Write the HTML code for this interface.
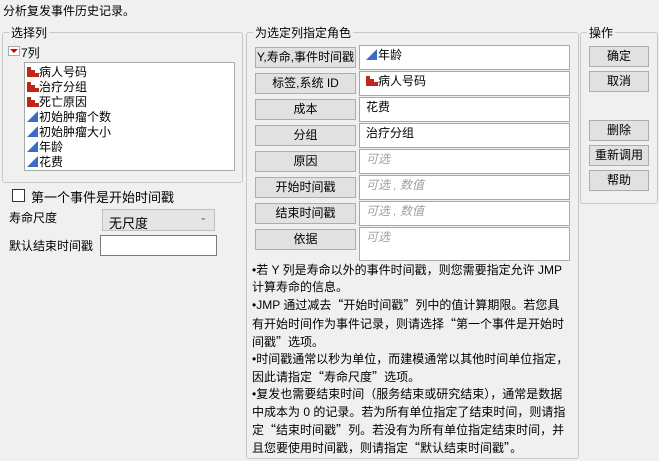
<!DOCTYPE html>
<html><head><meta charset="utf-8"><style>
*{box-sizing:border-box;margin:0;padding:0}
body{width:659px;height:461px;background:#f0f0f0;font-family:"Liberation Sans","Noto Sans CJK SC",sans-serif;font-size:12px;color:#000;position:relative;overflow:hidden}
.a{position:absolute;white-space:nowrap}
.fs{position:absolute;border:1px solid #c8c8c8;border-radius:3px}
.lg{position:absolute;background:#f0f0f0;padding:0 2px;top:-9px;left:6px;font-size:12px}
.btn{position:absolute;background:#e1e1e1;border:1px solid #adadad;text-align:center;font-size:12px;line-height:18px}
.box{position:absolute;background:#fff;border:1px solid #a9a9a9;padding:1px 0 0 6px;font-size:12px;line-height:16px}
.ph{color:#a0a0a0;font-style:italic}
.nom{display:inline-block;width:11px;height:11px;vertical-align:-1px;margin-right:1px;position:relative}
.nom i{position:absolute;bottom:0;width:4px;background:#c0271a}
.con{display:inline-block;width:0;height:0;border-left:11px solid transparent;border-bottom:11px solid #3a6cc4;vertical-align:-1px;margin-right:1px}
.notes{position:absolute;left:252px;top:262px;font-size:12px;line-height:17.2px;white-space:nowrap}
.q{font-family:"Noto Sans CJK SC",sans-serif}
</style></head><body>
<div class="a" style="left:3px;top:2px">分析复发事件历史记录。</div>

<div class="fs" style="left:2px;top:32px;width:241px;height:151px"><div class="lg">选择列</div></div>
<div class="a" style="left:8px;top:46px;width:12px;height:10px;border:1px solid #aaa;background:#fff"></div>
<div class="a" style="left:10px;top:49px;width:0;height:0;border-left:4px solid transparent;border-right:4px solid transparent;border-top:4px solid #d00"></div>
<div class="a" style="left:21px;top:44px">7列</div>
<div class="a" style="left:24px;top:62px;width:211px;height:109px;background:#fff;border:1px solid #a9a9a9;padding:2px 0 0 2px;line-height:15px">
<div><span class="nom"><i style="left:0;height:10px"></i><i style="left:4px;height:7px"></i><i style="left:8px;height:4px"></i></span>病人号码</div>
<div><span class="nom"><i style="left:0;height:10px"></i><i style="left:4px;height:7px"></i><i style="left:8px;height:4px"></i></span>治疗分组</div>
<div><span class="nom"><i style="left:0;height:10px"></i><i style="left:4px;height:7px"></i><i style="left:8px;height:4px"></i></span>死亡原因</div>
<div><span class="con"></span>初始肿瘤个数</div>
<div><span class="con"></span>初始肿瘤大小</div>
<div><span class="con"></span>年龄</div>
<div><span class="con"></span>花费</div>
</div>
<div class="a" style="left:12px;top:189px;width:13px;height:13px;background:#fff;border:1px solid #333"></div>
<div class="a" style="left:31px;top:187px;font-size:13px">第一个事件是开始时间戳</div>
<div class="a" style="left:9px;top:209px">寿命尺度</div>
<div class="a" style="left:102px;top:209px;width:113px;height:22px;background:#e5e5e5;border:1px solid #c0c0c0;padding:3px 0 0 6px;font-size:13px">无尺度<span style="position:absolute;right:7px;top:2px;font-size:9px;color:#555">⌄</span></div>
<div class="a" style="left:9px;top:237px">默认结束时间戳</div>
<div class="a" style="left:100px;top:235px;width:117px;height:21px;background:#fff;border:1px solid #7a7a7a"></div>

<div class="fs" style="left:246px;top:32px;width:333px;height:427px"><div class="lg">为选定列指定角色</div></div>
<div class="btn" style="left:255px;top:47px;width:101px;height:21px">Y,寿命,事件时间戳</div>
<div class="btn" style="left:255px;top:73px;width:101px;height:21px">标签,系统 ID</div>
<div class="btn" style="left:255px;top:99px;width:101px;height:21px">成本</div>
<div class="btn" style="left:255px;top:125px;width:101px;height:21px">分组</div>
<div class="btn" style="left:255px;top:151px;width:101px;height:21px">原因</div>
<div class="btn" style="left:255px;top:177px;width:101px;height:21px">开始时间戳</div>
<div class="btn" style="left:255px;top:203px;width:101px;height:21px">结束时间戳</div>
<div class="btn" style="left:255px;top:229px;width:101px;height:21px">依据</div>
<div class="box" style="left:359px;top:45px;width:211px;height:25px"><span class="con"></span>年龄</div>
<div class="box" style="left:359px;top:71px;width:211px;height:25px"><span class="nom"><i style="left:0;height:10px"></i><i style="left:4px;height:7px"></i><i style="left:8px;height:4px"></i></span>病人号码</div>
<div class="box" style="left:359px;top:97px;width:211px;height:25px">花费</div>
<div class="box" style="left:359px;top:123px;width:211px;height:25px">治疗分组</div>
<div class="box ph" style="left:359px;top:149px;width:211px;height:25px">可选</div>
<div class="box ph" style="left:359px;top:175px;width:211px;height:25px">可选 , 数值</div>
<div class="box ph" style="left:359px;top:201px;width:211px;height:25px">可选 , 数值</div>
<div class="box ph" style="left:359px;top:227px;width:211px;height:34px">可选</div>
<div class="notes">•若 Y 列是寿命以外的事件时间戳，则您需要指定允许 JMP<br>计算寿命的信息。<br>•JMP 通过减去<span class="q">“</span>开始时间戳<span class="q">”</span>列中的值计算期限。若您具<br>有开始时间作为事件记录，则请选择<span class="q">“</span>第一个事件是开始时<br>间戳<span class="q">”</span>选项。<br>•时间戳通常以秒为单位，而建模通常以其他时间单位指定，<br>因此请指定<span class="q">“</span>寿命尺度<span class="q">”</span>选项。<br>•复发也需要结束时间（服务结束或研究结束），通常是数据<br>中成本为 0 的记录。若为所有单位指定了结束时间，则请指<br>定<span class="q">“</span>结束时间戳<span class="q">”</span>列。若没有为所有单位指定结束时间，并<br>且您要使用时间戳，则请指定<span class="q">“</span>默认结束时间戳<span class="q">”</span>。</div>

<div class="fs" style="left:580px;top:32px;width:78px;height:172px"><div class="lg">操作</div></div>
<div class="btn" style="left:589px;top:46px;width:60px;height:21px">确定</div>
<div class="btn" style="left:589px;top:71px;width:60px;height:21px">取消</div>
<div class="btn" style="left:589px;top:120px;width:60px;height:21px">删除</div>
<div class="btn" style="left:589px;top:145px;width:60px;height:21px">重新调用</div>
<div class="btn" style="left:589px;top:170px;width:60px;height:21px">帮助</div>
</body></html>
